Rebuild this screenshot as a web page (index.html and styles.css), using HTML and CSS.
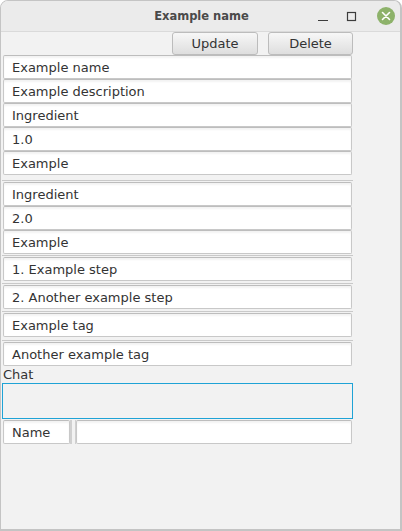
FILE: index.html
```html
<!DOCTYPE html>
<html>
<head>
<meta charset="utf-8">
<link rel="stylesheet" href="styles.css">
</head>
<body>
<div class="window">
  <div class="titlebar">
    <div class="title">Example name</div>
    <div class="controls">
      <svg class="ctl" width="14" height="14" viewBox="0 0 14 14"><line x1="2" y1="11.5" x2="12" y2="11.5" stroke="#3c3c3c" stroke-width="1.2"/></svg>
      <svg class="ctl" width="14" height="14" viewBox="0 0 14 14"><rect x="3.5" y="3.5" width="8" height="8" fill="none" stroke="#3c3c3c" stroke-width="1.2"/></svg>
      <svg class="ctl close" width="20" height="20" viewBox="0 0 20 20"><circle cx="10" cy="10" r="9" fill="#8db26a"/><path d="M6.5 6.5 L13.5 13.5 M13.5 6.5 L6.5 13.5" stroke="#fff" stroke-width="1.6" stroke-linecap="round"/></svg>
    </div>
  </div>
  <div class="content">
    <div class="buttons">
      <button class="btn btn-update">Update</button>
      <button class="btn btn-delete">Delete</button>
    </div>
    <div class="group g-top">
      <div class="field">Example name</div>
      <div class="field">Example description</div>
    </div>
    <div class="group g-ing1">
      <div class="field">Ingredient</div>
      <div class="field">1.0</div>
      <div class="field">Example</div>
    </div>
    <div class="group g-ing2">
      <div class="field">Ingredient</div>
      <div class="field">2.0</div>
      <div class="field">Example</div>
    </div>
    <div class="group g-step1">
      <div class="field">1. Example step</div>
    </div>
    <div class="group g-step2">
      <div class="field">2. Another example step</div>
    </div>
    <div class="group g-tag1">
      <div class="field">Example tag</div>
    </div>
    <div class="group g-tag2">
      <div class="field">Another example tag</div>
    </div>
    <div class="chat-label">Chat</div>
    <div class="chat-box"></div>
    <div class="name-row">
      <div class="field name-label">Name</div>
      <div class="divider"></div>
      <div class="field name-input"></div>
    </div>
  </div>
</div>
</body>
</html>
```
FILE: styles.css
```css
html, body {
  margin: 0;
  padding: 0;
  background: #ffffff;
}
body {
  width: 402px;
  height: 531px;
  overflow: hidden;
  font-family: "DejaVu Sans", sans-serif;
  font-size: 13px;
  color: #333333;
}
.window {
  box-sizing: border-box;
  width: 402px;
  height: 531px;
  border: 1px solid #c4c4c4;
  border-right-width: 2px;
  border-bottom-width: 2px;
  border-radius: 8px 8px 0 0;
  background: #f2f2f2;
  display: flex;
  flex-direction: column;
  overflow: hidden;
}
.titlebar {
  height: 30px;
  flex: none;
  background: #ebebeb;
  border-bottom: 1px solid #dadada;
  display: flex;
  align-items: center;
  justify-content: center;
  position: relative;
}
.title {
  font-family: "DejaVu Sans", sans-serif;
  font-weight: bold;
  font-size: 11.5px;
  color: #4a4a4a;
  margin-left: 2px;
  margin-top: 0;
}
.controls {
  position: absolute;
  right: 4px;
  top: 5px;
  display: flex;
  align-items: center;
  gap: 14px;
}
.ctl { display: block; }
.close { margin-left: 4px; }
.content {
  flex: 1;
  padding: 0 0 0 1px;
}
.buttons {
  display: flex;
  justify-content: flex-end;
  gap: 10px;
  width: 351px;
  height: 23px;
}
.btn {
  box-sizing: border-box;
  height: 23px;
  padding: 0;
  border: 1px solid #bcbcbc;
  border-radius: 3px;
  background: linear-gradient(#f7f7f7, #dedede);
  font-family: "DejaVu Sans", sans-serif;
  font-size: 13px;
  color: #333333;
}
.btn-update { width: 86px; }
.btn-delete { width: 85px; }
.group {
  width: 350px;
  display: flex;
  flex-direction: column;
  gap: 0;
  padding-left: 1px;
}
.g-ing2, .g-step1, .g-step2, .g-tag1, .g-tag2 {
  border-top: 1px solid #c9c9c9;
  padding-top: 1px;
}
.g-ing2 { margin-top: 5px; }
.g-step1 { margin-top: 1px; }
.g-step2 { margin-top: 2px; }
.g-tag1 { margin-top: 2px; }
.g-tag2 { margin-top: 3px; }
.field {
  box-sizing: border-box;
  height: 24px;
  width: 349px;
  background: #ffffff;
  border: 1px solid #c8c8c8;
  border-top-color: #bdbdbd;
  border-radius: 2px;
  box-shadow: inset 0 2px 2px rgba(0, 0, 0, 0.05);
  padding-left: 8px;
  display: flex;
  align-items: center;
  line-height: 1;
}
.chat-label {
  margin-top: 1px;
  margin-left: 1px;
  height: 16px;
  line-height: 15px;
}
.chat-box {
  box-sizing: border-box;
  width: 351px;
  height: 36px;
  margin-left: 0;
  border: 1px solid #1fa3d6;
  background: #f2f2f2;
}
.name-row {
  display: flex;
  width: 349px;
  margin-top: 1px;
  margin-left: 1px;
  height: 24px;
}
.name-label {
  width: 67px;
  flex: none;
}
.divider {
  box-sizing: border-box;
  width: 6px;
  flex: none;
  border-left: 2px solid #d0d0d0;
  border-right: 1px solid #d0d0d0;
}
.name-input {
  width: auto;
  flex: 1;
}
```
